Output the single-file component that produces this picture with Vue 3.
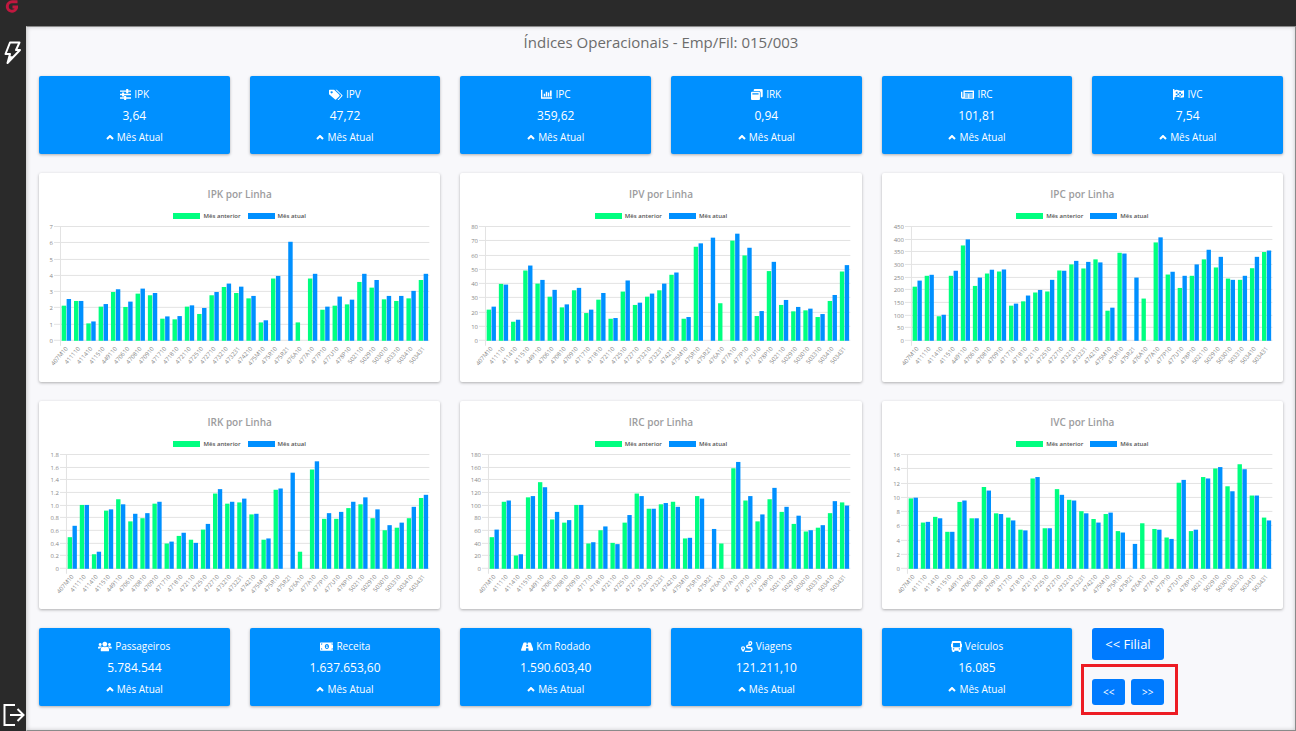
<script setup>
const lines = [
  '407M10', '411110', '411410', '411510', '449110', '470610', '470810', '470910', '471710', '471810',
  '472110', '472510', '472710', '473210', '473231', '474210', '475M10', '475R10', '475R21', '476A10',
  '477A10', '477P10', '477U10', '478P10', '502110', '502910', '503010', '503310', '503410', '503431'
]

const indices = [
  { label: 'IPK', value: '3,64', icon: 'sliders' },
  { label: 'IPV', value: '47,72', icon: 'tags' },
  { label: 'IPC', value: '359,62', icon: 'chart' },
  { label: 'IRK', value: '0,94', icon: 'windows' },
  { label: 'IRC', value: '101,81', icon: 'news' },
  { label: 'IVC', value: '7,54', icon: 'flag' }
]

const totals = [
  { label: 'Passageiros', value: '5.784.544', icon: 'users' },
  { label: 'Receita', value: '1.637.653,60', icon: 'money' },
  { label: 'Km Rodado', value: '1.590.603,40', icon: 'road' },
  { label: 'Viagens', value: '121.211,10', icon: 'route' },
  { label: 'Veículos', value: '16.085', icon: 'bus' }
]

const charts = [
  {
    name: 'IPK', left: 21, max: 7, step: 1, digits: 0,
    before: [2.16, 2.45, 1.07, 2.1, 3, 2.08, 2.9, 2.8, 1.36, 1.32, 2.1, 1.65, 2.8, 3.31, 2.94, 2.61, 1.13, 3.83, 0, 1.13, 3.83, 1.91, 2.16, 2.24, 3.62, 3.27, 2.55, 2.45, 2.61, 3.74],
    now: [2.57, 2.45, 1.19, 2.26, 3.17, 2.41, 3.21, 2.94, 1.5, 1.52, 2.18, 2.02, 3, 3.52, 3.33, 2.76, 1.26, 3.99, 6.09, 0, 4.12, 2.1, 2.72, 2.53, 4.12, 3.74, 2.76, 2.76, 3.07, 4.12]
  },
  {
    name: 'IPV', left: 25, max: 80, step: 10, digits: 0,
    before: [21.9, 40, 13.4, 49.4, 40.2, 31, 23.5, 35.5, 19.5, 28.9, 15.5, 34.6, 25.2, 31, 35.5, 46.4, 15.5, 66.1, 0, 26.4, 70.4, 60, 17.4, 49, 25.2, 20.7, 21.4, 16.7, 28, 48.7],
    now: [24, 39.5, 14.8, 52.9, 42.8, 35.8, 25.6, 37.2, 21.9, 33.6, 16, 42.4, 26.8, 33.2, 40.2, 48, 16.7, 68.5, 72.5, 0, 75.3, 65.4, 20.9, 55.5, 28.7, 23.8, 22.6, 18.8, 32.2, 53.2]
  },
  {
    name: 'IPC', left: 29, max: 450, step: 50, digits: 0,
    before: [214, 257, 97, 257, 377, 217, 266, 274, 139, 156, 191, 195, 278, 302, 286, 322, 119, 348, 0, 167, 389, 262, 209, 257, 322, 290, 246, 241, 287, 351],
    now: [238, 261, 103, 277, 401, 250, 281, 282, 147, 179, 201, 241, 277, 316, 312, 310, 131, 345, 250, 0, 409, 273, 257, 302, 360, 332, 241, 257, 332, 357]
  },
  {
    name: 'IRK', left: 27, max: 1.8, step: 0.2, digits: 1,
    before: [0.5, 1.01, 0.23, 0.92, 1.1, 0.75, 0.8, 1.03, 0.4, 0.52, 0.46, 0.62, 1.19, 1.03, 1.05, 0.86, 0.46, 1.25, 0, 0.27, 1.57, 0.79, 0.79, 0.96, 1.02, 0.8, 0.61, 0.65, 0.8, 1.12],
    now: [0.68, 1.01, 0.27, 0.94, 1.02, 0.87, 0.88, 1.06, 0.43, 0.57, 0.41, 0.71, 1.26, 1.06, 1.11, 0.87, 0.48, 1.27, 1.52, 0, 1.7, 0.88, 0.9, 1.06, 1.13, 0.94, 0.69, 0.73, 0.98, 1.17]
  },
  {
    name: 'IRC', left: 28, max: 180, step: 20, digits: 0,
    before: [50, 106, 21, 113, 137, 78, 73, 101, 40, 61, 41, 73, 119, 95, 102, 106, 48, 115, 0, 40, 159, 108, 75, 110, 90, 71, 59, 65, 88, 105],
    now: [62, 108, 23, 115, 129, 90, 77, 101, 42, 67, 39, 85, 115, 95, 104, 98, 49, 111, 63, 0, 169, 115, 86, 128, 98, 84, 61, 69, 107, 100]
  },
  {
    name: 'IVC', left: 25, max: 16, step: 2, digits: 0,
    before: [9.9, 6.5, 7.3, 5.2, 9.4, 7.1, 11.5, 7.8, 7.2, 5.5, 12.7, 5.7, 11.2, 9.7, 8.1, 7, 7.7, 5.3, 0, 6.4, 5.6, 4.4, 12.1, 5.3, 12.9, 14.1, 11.6, 14.7, 10.3, 7.2],
    now: [10, 6.6, 7.1, 5.2, 9.6, 7.1, 11, 7.7, 6.8, 5.4, 12.9, 5.7, 10.4, 9.6, 7.8, 6.5, 7.9, 5.1, 3.5, 0, 5.5, 4.2, 12.5, 5.5, 12.7, 14.3, 10.9, 14, 10.3, 6.8]
  }
]

// w is the width of the icon's own box, every icon is 16 high
const icons = {
  sliders: { w: 17, d: 'M0 2h9V0h3v2h5v2h-5v2H9V4H0zM0 7h3V5h3v2h11v2H6v2H3V9H0zM0 12h6v-2h3v2h8v2H9v2H6v-2H0z' },
  tags: { w: 20, d: 'M0 2Q0 1 1 1H7.500L15 8.500Q16 9.500 15 10.500L10.500 15Q9.500 16 8.500 15L0 7.500ZM3.800 3.300a1.500 1.500 0 1 0 .1 0ZM9.500 1h1.800l7.900 7.600q1 1 0 2L14.500 15.500q-1 .8-2 0l5-5.400q.6-.6 0-1.200Z' },
  chart: { w: 17, d: 'M0 1h2v11h15v2H0zM4 7h2v4H4zM7 4h2v7H7zM10 5h2v6h-2zM13 2h2.500v9H13z' },
  windows: { w: 17, d: 'M4 1.500Q4 0 5.500 0h10Q17 0 17 1.500v9Q17 12 15.500 12H14V5.500Q14 3 12 3H4ZM1.500 4h10Q13 4 13 5.500v9Q13 16 11.500 16h-10Q0 16 0 14.500v-9Q0 4 1.500 4ZM2 6v2h9V6Z' },
  news: { w: 19, d: 'M3.500 2H18q1 0 1 1v10q0 1-1 1H2q-2 0-2-2V4h2v8h1.500ZM5.500 4.500v2H17V4.500ZM5.500 8v1.500h5V8ZM12 8v1.500h5V8ZM5.500 11v1.500h5V11ZM12 11v1.500h5V11Z' },
  flag: { w: 17, d: 'M0 0h2v2q3-1.500 7 0t8-.5v10q-4 2-8 .5t-7 .5v3.500H0ZM4 4v2.500l2.500-.5V3.500ZM9 4.300v2.500l2.500.4V4.500ZM6.500 6v2.700l2.500.5V6.800ZM11.500 7.200v2.500l2.500-.5V6.700ZM4 8.800v2l2.500-.6V8.700ZM9 9.200v1.800l2.500.3V9.700Z' },
  users: { w: 20, d: 'M10 1a3.500 3.500 0 1 1-.1 0ZM3.200 3a2.100 2.100 0 1 1-.1 0ZM16.800 3a2.100 2.100 0 1 1-.1 0ZM4 14v-2q0-3.500 3.500-3.500 2.500 1 5 0Q16 8.500 16 12v2q0 1-1 1H5q-1 0-1-1ZM0 11V9.500Q0 8 2 8h2.300q1 0 1.300.400Q3.500 9 3.200 11ZM20 11V9.500Q20 8 18 8h-2.300q-1 0-1.300.400 2.100.600 2.400 2.600Z' },
  money: { w: 20, d: 'M1 2h18q1 0 1 1v10q0 1-1 1H1q-1 0-1-1V3q0-1 1-1ZM1.500 3.500v2q2 0 2-2ZM18.500 3.500v2q-2 0-2-2ZM1.500 12.500v-2q2 0 2 2ZM18.500 12.500v-2q-2 0-2 2ZM10 4.500a3 3.500 0 1 0 .1 0ZM9.200 6h1.500v3h.6v1H8.800V9h.6V7h-.6Z' },
  road: { w: 18, d: 'M4.500 2H8v2h2V2h3.500q.8 0 1 .8L18 13q.2 1-.8 1H11l-.3-3.500H7.300L7 14H.8q-1 0-.8-1L3.500 2.800q.2-.8 1-.8ZM7.800 5.500l-.3 3h3l-.3-3Z' },
  route: { w: 17, d: 'M13.500 0a3 3 0 0 1 3 3q0 1.500-2.300 4H10.500q-1 0-1 .8t1 .8h3.200q3.300 0 3.300 3.500T13.500 16H5q1-1 1.500-2h7q1.300 0 1.300-1.500T13.500 11h-3Q7.300 11 7.300 8T10.500 5h.7q-.7-1.300-.7-2a3 3 0 0 1 3-3ZM13.500 2a1.100 1.100 0 1 0 .1 0ZM3 7.500a3 3 0 0 1 3 3Q6 12.500 3 16q-3-3.500-3-5.500a3 3 0 0 1 3-3ZM3 9.500a1.100 1.100 0 1 0 .1 0Z' },
  bus: { w: 16, d: 'M3 0h10q2 0 2 2v2h.5q.5 0 .5.500v4q0 .5-.5.500H15v4q0 1-1 1v1.500q0 .5-.5.500h-2q-.5 0-.5-.500V14H5v1.500q0 .5-.5.500h-2q-.5 0-.5-.500V14q-1 0-1-1V9H.5Q0 9 0 8.500v-4Q0 4 .5 4H1V2q0-2 2-2ZM3 3v6h10V3ZM3.800 10.500a1 1 0 1 0 .1 0ZM12.200 10.500a1 1 0 1 0 .1 0Z' }
}

// plot area inside the 402 x 161 viewBox
const top = 6
const bottom = 120
const right = 391

function getY(chart, value) {
  return bottom - (value / chart.max) * (bottom - top)
}

function getTicks(chart) {
  const count = Math.round(chart.max / chart.step)
  return Array.from({ length: count + 1 }, (_, i) => {
    const value = i * chart.step
    return { y: Math.round(getY(chart, value)), text: i === 0 ? '0' : value.toFixed(chart.digits) }
  })
}

function getBars(chart) {
  const slot = (right - chart.left) / lines.length
  return lines.map((line, i) => ({
    line,
    x: chart.left + slot * i,
    middle: chart.left + slot * (i + 0.5),
    width: slot * 0.36,
    before: getY(chart, chart.before[i]),
    now: getY(chart, chart.now[i]),
    slot
  }))
}
</script>

<template>
<div class="app">
    <header class="topbar">
        <svg class="logo" viewBox="0 0 14 14" aria-hidden="true">
            <path d="M12.500 1.800H7A4.700 4.700 0 1 0 11.500 7.800V7H7.500" fill="none" stroke="#c0183f" stroke-width="3" />
        </svg>
    </header>

    <nav class="sidebar">
        <button class="side" aria-label="Indicadores">
            <svg width="18" height="24" viewBox="0 0 18 24">
                <path d="M6 1.500h9.500L12 9h4L3.500 22 6 13H1.500Z" fill="none" stroke="#fff" stroke-width="2" stroke-linejoin="round" />
                <path d="M5.500 15 3.500 22 9 15.500Z" fill="#fff" />
            </svg>
        </button>
        <button class="side" aria-label="Sair">
            <svg width="24" height="24" viewBox="0 0 24 24">
                <path d="M14 2H3.500v20H14M9 12h13M16.500 6l6 6-6 6" fill="none" stroke="#fff" stroke-width="2" />
            </svg>
        </button>
    </nav>

    <main class="panel">
        <h1>Índices Operacionais - Emp/Fil: 015/003</h1>

        <div class="cards">
            <section v-for="card in indices" :key="card.label" class="card">
                <h2>
                    <svg class="icon" :viewBox="`0 0 ${icons[card.icon].w} 16`"><path :d="icons[card.icon].d" fill-rule="evenodd" /></svg>
                    {{card.label}}
                </h2>
                <strong>{{card.value}}</strong>
                <p><svg class="caret" viewBox="0 0 8 5"><path d="M1 4l3-3 3 3" /></svg> Mês Atual</p>
            </section>
        </div>

        <div class="charts">
            <section v-for="chart in charts" :key="chart.name" class="chart">
                <h2>{{chart.name}} por Linha</h2>
                <div class="legend">
                    <span><i class="before"></i>Mês anterior</span>
                    <span><i class="now"></i>Mês atual</span>
                </div>
                <svg class="plot" viewBox="0 0 402 161">
                    <g v-for="tick in getTicks(chart)" :key="tick.text">
                        <rect class="grid" :x="chart.left - 6" :y="tick.y - 1" :width="right - chart.left + 6" height="1" />
                        <text :x="chart.left - 7" :y="tick.y + 2" text-anchor="end">{{tick.text}}</text>
                    </g>
                    <rect class="grid" :x="chart.left" :y="top" width="1" :height="bottom - top + 5" />
                    <g v-for="bar in getBars(chart)" :key="bar.line">
                        <rect class="before" :x="bar.x + bar.slot * 0.14" :y="bar.before" :width="bar.width" :height="bottom - bar.before" />
                        <rect class="now" :x="bar.x + bar.slot * 0.54" :y="bar.now" :width="bar.width" :height="bottom - bar.now" />
                        <text :transform="`translate(${bar.middle + 2} ${bottom + 8}) rotate(-50)`" text-anchor="end">{{bar.line}}</text>
                    </g>
                </svg>
            </section>
        </div>

        <div class="cards">
            <section v-for="card in totals" :key="card.label" class="card">
                <h2>
                    <svg class="icon" :viewBox="`0 0 ${icons[card.icon].w} 16`"><path :d="icons[card.icon].d" fill-rule="evenodd" /></svg>
                    {{card.label}}
                </h2>
                <strong>{{card.value}}</strong>
                <p><svg class="caret" viewBox="0 0 8 5"><path d="M1 4l3-3 3 3" /></svg> Mês Atual</p>
            </section>
            <div class="actions">
                <button class="btn large">&lt;&lt; Filial</button>
                <div class="pager">
                    <button class="btn">&lt;&lt;</button>
                    <button class="btn">&gt;&gt;</button>
                </div>
            </div>
        </div>
    </main>
</div>
</template>

<style>
body {
    margin:0;
    background:#2a2a2a;
}
</style>

<style scoped>
* {
    box-sizing:border-box;
}

.app {
    display:grid;
    grid-template-columns:26px 1fr;
    grid-template-rows:26px 1fr;
    min-height:100vh;
    background:#2a2a2a;
    font-family:"Open Sans", "Noto Sans", sans-serif;
}

.topbar {
    grid-column:1 / 3;
    padding-left:5px;
}

.logo {
    display:block;
    width:14px;
    height:14px;
}

.sidebar {
    display:flex;
    flex-direction:column;
    justify-content:space-between;
    align-items:center;
    padding:15px 0 4px;
}

.side {
    display:block;
    padding:0;
    border:0;
    background:none;
}

.side svg {
    display:block;
}

.panel {
    display:flex;
    flex-direction:column;
    gap:19px;
    padding:3px 12px 12px;
    border:1px solid #8a8a8a;
    border-left-color:#d8d8d8;
    background:#f8f8fb;
    box-shadow:inset 0 0 4px rgba(0, 0, 0, 0.2);
}

h1 {
    margin:0 0 3px;
    line-height:24px;
    font-size:15px;
    font-weight:normal;
    text-align:center;
    color:#6c6c6c;
}

.cards {
    display:grid;
    grid-template-columns:repeat(6, 1fr);
    align-items:start;
    gap:20px;
}

.card {
    padding:8px;
    border-radius:2px;
    background:#0090ff;
    box-shadow:0 1px 3px rgba(0, 0, 0, 0.3);
    color:#fff;
    text-align:center;
}

.card h2 {
    display:flex;
    justify-content:center;
    align-items:center;
    gap:3px;
    margin:0;
    line-height:20px;
    font-size:10px;
    font-weight:normal;
}

.card strong {
    display:block;
    line-height:24px;
    font-size:12px;
    font-weight:normal;
}

.card p {
    display:flex;
    justify-content:center;
    align-items:center;
    gap:3px;
    margin:0;
    line-height:18px;
    font-size:10px;
}

.icon {
    height:11px;
    fill:#fff;
}

.caret {
    width:8px;
    height:5px;
    fill:none;
    stroke:#fff;
    stroke-width:2;
}

.charts {
    display:grid;
    grid-template-columns:repeat(3, 1fr);
    gap:19px 20px;
}

.chart {
    padding-top:11px;
    border-radius:2px;
    background:#fff;
    box-shadow:0 1px 3px rgba(0, 0, 0, 0.3);
}

.chart h2 {
    margin:0;
    line-height:20px;
    font-size:10px;
    font-weight:600;
    text-align:center;
    color:#9c9c9e;
}

.legend {
    display:flex;
    justify-content:center;
    gap:7px;
    padding-top:7px;
    line-height:10px;
    font-size:6px;
    font-weight:600;
    color:#555;
}

.legend span {
    display:flex;
    align-items:center;
    gap:3px;
}

.legend i {
    width:27px;
    height:6px;
}

i.before {
    background:#00ff80;
}

i.now {
    background:#0090ff;
}

.plot {
    display:block;
    width:100%;
}

.plot text {
    font-size:6px;
    fill:#888;
}

.grid {
    fill:#e3e3e3;
}

rect.before {
    fill:#00ff80;
}

rect.now {
    fill:#0090ff;
}

.btn {
    min-width:33px;
    height:26px;
    padding:0 8px;
    border:0;
    border-radius:3px;
    background:#007bff;
    color:#fff;
    font-family:inherit;
    font-size:10px;
}

.btn.large {
    display:block;
    height:32px;
    padding:0 13px;
    font-size:13px;
}

.pager {
    display:flex;
    gap:6px;
    width:fit-content;
    margin:4px 0 0 -11px;
    padding:12px 11px 7px 8px;
    border:3px solid #ed1c24;
}
</style>
